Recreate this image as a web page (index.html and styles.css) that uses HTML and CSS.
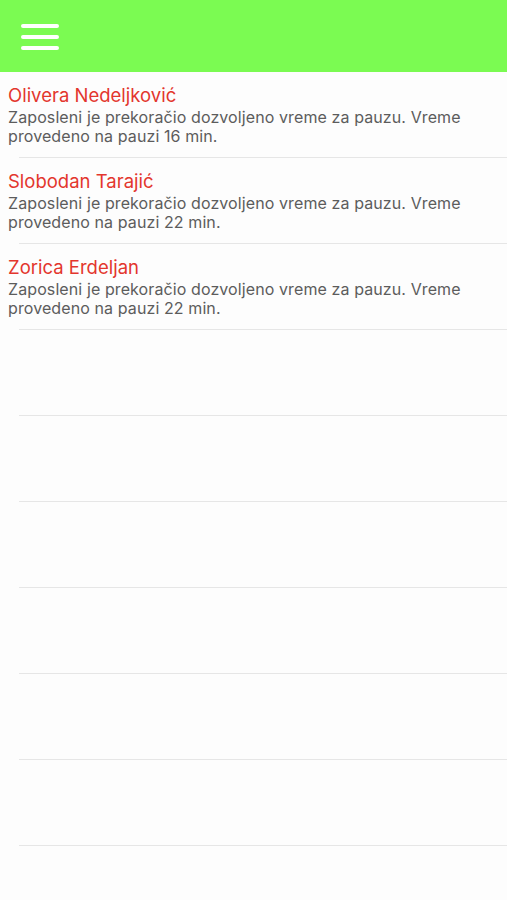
FILE: index.html
```html
<!DOCTYPE html>
<html lang="sr">

<head>
    <meta charset="UTF-8">
    <meta name="viewport" content="width=device-width, initial-scale=1.0">
    <title>Obaveštenja</title>
    <link rel="stylesheet" href="styles.css">
</head>

<body>

    <header class="topbar">
        <button class="menuBtn" aria-label="Meni">
            <span></span>
            <span></span>
            <span></span>
        </button>
    </header>

    <ul class="list">
        <li class="item">
            <div class="name">Olivera Nedeljković</div>
            <div class="msg">Zaposleni je prekoračio dozvoljeno vreme za pauzu. Vreme provedeno na pauzi 16 min.</div>
        </li>
        <li class="item">
            <div class="name">Slobodan Tarajić</div>
            <div class="msg">Zaposleni je prekoračio dozvoljeno vreme za pauzu. Vreme provedeno na pauzi 22 min.</div>
        </li>
        <li class="item">
            <div class="name">Zorica Erdeljan</div>
            <div class="msg">Zaposleni je prekoračio dozvoljeno vreme za pauzu. Vreme provedeno na pauzi 22 min.</div>
        </li>
        <li class="item"></li>
        <li class="item"></li>
        <li class="item"></li>
        <li class="item"></li>
        <li class="item"></li>
        <li class="item"></li>
        <li class="item"></li>
    </ul>

</body>

</html>
```

FILE: styles.css
```css
body {
    margin: 0;
    font-family: Inter, "Open Sans", Arial, sans-serif;
    background: #fdfdfd;
    overflow: hidden;
}

.topbar {
    height: 72px;
    background: #7bfb52;
    display: flex;
    align-items: center;
    padding-left: 21px;
}

.menuBtn {
    display: flex;
    flex-direction: column;
    gap: 7px;
    padding: 0;
    border: none;
    background: none;
    margin-top: 1px;
}

.menuBtn span {
    display: block;
    width: 38px;
    height: 4px;
    border-radius: 2px;
    background: #fff;
}

.list {
    list-style-type: none;
    margin: 0;
    padding: 0;
}

.item {
    height: 86px;
    box-sizing: border-box;
    margin-left: 19px;
    padding: 12px 20px 0 0;
    border-bottom: 1px solid #e6e6e6;
}

.name,
.msg {
    margin-left: -11px;
}

.name {
    color: #e3362d;
    font-size: 18.5px;
    line-height: 23px;
}

.msg {
    margin-top: 1px;
    color: #5c5c5c;
    font-size: 16px;
    line-height: 19px;
    letter-spacing: 0.1px;
}
```
